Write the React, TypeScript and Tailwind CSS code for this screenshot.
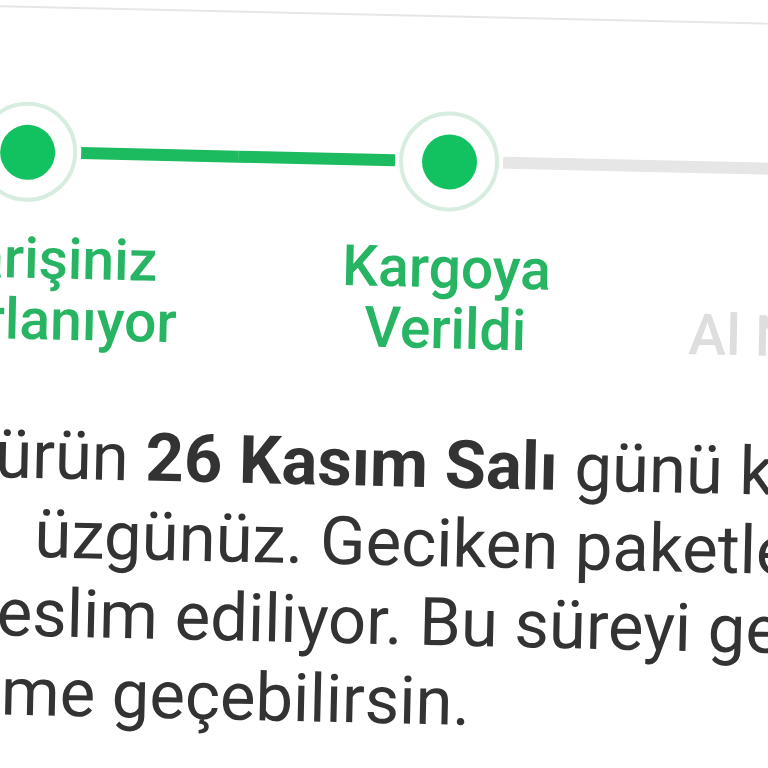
import React from "react";

type Step = { l1: string; l2: string; active: boolean; leftActive: boolean; rightActive: boolean };

const steps: Step[] = [
  { l1: "Siparişiniz", l2: "Hazırlanıyor", active: true, leftActive: true, rightActive: true },
  { l1: "Kargoya", l2: "Verildi", active: true, leftActive: true, rightActive: false },
  { l1: "Gel", l2: "Al Noktasında", active: false, leftActive: false, rightActive: false },
];

function Line({ prefix, offset, children }: { prefix?: string; offset: string; children: React.ReactNode }) {
  return (
    <div className="flex whitespace-nowrap">
      <div className={`w-0 shrink-0 flex justify-end ${offset}`}>
        <span>{prefix}</span>
      </div>
      <span>{children}</span>
    </div>
  );
}

export default function App() {
  return (
    <div className="w-[768px] h-[768px] overflow-hidden bg-white">
      <div className="w-[768px] h-[768px] rotate-[1.3deg] font-[family-name:Roboto,sans-serif] pt-[14px]">
        <div className="h-[2px] bg-[#e6e6e6] -mx-[30px]" />
        <div className="flex ml-[-189px] mt-[94px]">
          {steps.map((s, i) => (
            <div key={i} className="w-[422px] shrink-0 flex flex-col items-center">
              <div className="flex items-center w-full">
                <div className={`flex-1 h-[12px] ${s.leftActive ? "bg-[#1dbb5f]" : "bg-[#e6e6e6]"}`} />
                <div
                  className={`w-[100px] h-[100px] mx-[4px] rounded-full border-[4px] flex items-center justify-center ${
                    s.active ? "border-[#d6ede0]" : "border-[#ececec]"
                  }`}
                >
                  <div className={`w-[55px] h-[55px] rounded-full ${s.active ? "bg-[#12c260]" : "bg-[#e0e0e0]"}`} />
                </div>
                <div className={`flex-1 h-[12px] ${s.rightActive ? "bg-[#1dbb5f]" : "bg-[#e6e6e6]"}`} />
              </div>
              <div
                className={`mt-[26px] text-[57px] leading-[61px] font-medium text-center whitespace-nowrap ${
                  s.active ? "text-[#27b463]" : "text-[#dedede]"
                }`}
              >
                <div>{s.l1}</div>
                <div>{s.l2}</div>
              </div>
            </div>
          ))}
        </div>
        <div className="mt-[66px] text-[67px] leading-[79px] text-[#333333]">
          <Line prefix="Siparişindeki " offset="ml-[-3px]">
            ürün <span className="font-bold">26 Kasım Salı</span> günü kargoya verildi.
          </Line>
          <Line offset="ml-[38px]">üzgünüz. Geciken paketler genellikle</Line>
          <Line prefix="2-3 iş günü içinde t" offset="ml-[2px]">eslim ediliyor. Bu süreyi geçerse</Line>
          <Line prefix="bizimle iletişi" offset="ml-[8px]">me geçebilirsin.</Line>
        </div>
      </div>
    </div>
  );
}
